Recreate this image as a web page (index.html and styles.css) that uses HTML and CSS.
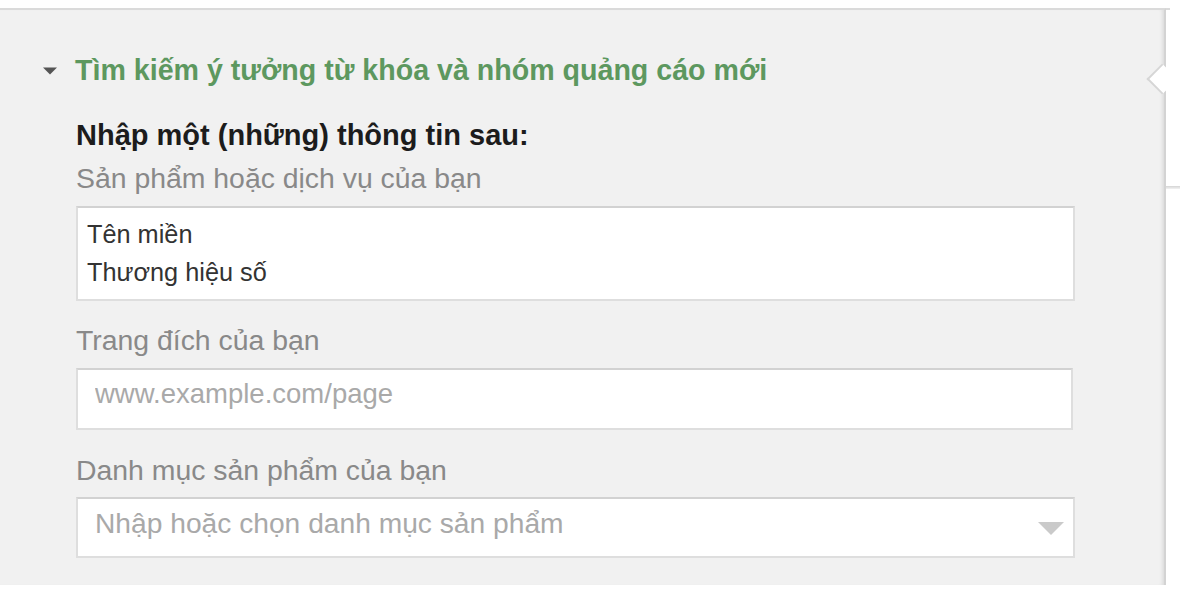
FILE: index.html
```html
<!DOCTYPE html>
<html lang="vi">
<head>
<meta charset="UTF-8" />
<meta name="viewport" content="width=device-width, initial-scale=1.0" />
<title>Tìm kiếm ý tưởng từ khóa</title>
<link rel="stylesheet" href="styles.css">
</head>
<body>
  <div class="frame">
    <div class="panel">
      <span class="notch"></span>
      <h2 class="section-title">
        <svg class="caret" width="16" height="8" viewBox="0 0 16 8"><polygon points="1,0.5 15,0.5 8,7.5" fill="#555" /></svg>
        Tìm kiếm ý tưởng từ khóa và nhóm quảng cáo mới
      </h2>
      <form class="idea-form">
        <p class="intro">Nhập một (những) thông tin sau:</p>
        <label class="field-label first" for="products">Sản phẩm hoặc dịch vụ của bạn</label>
        <textarea id="products" name="products">Tên miền
Thương hiệu số</textarea>

        <label class="field-label" for="landing">Trang đích của bạn</label>
        <input class="text-input" type="text" id="landing" name="landing" placeholder="www.example.com/page" />

        <label class="field-label last" for="category">Danh mục sản phẩm của bạn</label>
        <div class="combo">
          <input type="text" id="category" name="category" placeholder="Nhập hoặc chọn danh mục sản phẩm" />
          <svg class="combo-arrow" width="30" height="15" viewBox="0 0 30 15"><polygon points="2,1 28,1 15,14" fill="#cacaca" /></svg>
        </div>
      </form>
    </div>
    <div class="side"></div>
  </div>
</body>
</html>
```

FILE: styles.css
```css
html {
  margin: 0;
  padding: 0;
  box-sizing: border-box;
}

*, *::before, *::after {
  box-sizing: inherit;
}

body {
  margin: 0;
  background-color: #fff;
  font-family: "Liberation Sans", Arial, sans-serif;
}

.frame {
  display: flex;
  margin-top: 8px;
}

.panel {
  position: relative;
  width: 1166px;
  padding: 44px 0 27px 0;
  background-color: #f1f1f1;
  border-top: 2px solid #dadada;
  border-right: 2px solid #d3d3d3;
  box-shadow: inset -4px 0 4px -3px rgba(0, 0, 0, 0.12);
}

/* little arrow cut into the right edge */
.notch {
  position: absolute;
  left: 1151px;
  top: 58px;
  width: 22px;
  height: 22px;
  background-color: #fff;
  border-left: 2px solid #d6d6d6;
  border-bottom: 2px solid #d6d6d6;
  transform: rotate(45deg);
}

.side {
  flex: 1;
  display: flex;
  flex-direction: column;
}

.side::before {
  content: "";
  width: 4px;
  border-top: 2px solid #dadada;
}

.side::after {
  content: "";
  margin-top: 176px;
  height: 3px;
  background: linear-gradient(#d4d4d4, #f2f2f2);
}

.section-title {
  display: flex;
  align-items: center;
  gap: 17px;
  margin: 0;
  padding-left: 42px;
  font-size: 28.6px;
  line-height: 32px;
  font-weight: bold;
  color: #5d985f;
}

.caret {
  margin-top: 2px;
}

.idea-form {
  display: flex;
  flex-direction: column;
  margin-left: 76px;
  width: 999px;
}

.intro {
  margin: 33px 0 0 0;
  font-size: 29px;
  line-height: 32px;
  font-weight: bold;
  color: #1c1c1c;
}

.field-label {
  display: block;
  margin-top: 23px;
  font-size: 28.4px;
  line-height: 32px;
  color: #898989;
}

.field-label.first {
  margin-top: 11px;
}

.field-label.last {
  margin-top: 24px;
}

textarea {
  display: block;
  margin-top: 12px;
  width: 999px;
  height: 95px;
  padding: 7px 9px;
  resize: none;
  overflow: hidden;
  font-family: inherit;
  font-size: 25.3px;
  line-height: 38px;
  color: #333;
  background-color: #fff;
  border: 2px solid #dedede;
  border-top-color: #d2d2d2;
  border-radius: 0;
  outline: none;
}

.text-input {
  display: block;
  margin-top: 12px;
  width: 997px;
  height: 62px;
  padding: 8px 17px 18px 17px;
  font-family: inherit;
  font-size: 27.5px;
  color: #333;
  background-color: #fff;
  border: 2px solid #dedede;
  border-top-color: #d2d2d2;
  border-radius: 0;
  outline: none;
}

.combo {
  display: flex;
  align-items: center;
  margin-top: 11px;
  width: 999px;
  height: 61px;
  padding: 0 7px 0 17px;
  background-color: #fff;
  border: 2px solid #dedede;
  border-top-color: #d2d2d2;
}

.combo input {
  flex: 1;
  align-self: flex-start;
  height: 57px;
  padding: 8px 0 17px 0;
  font-family: inherit;
  font-size: 28.2px;
  color: #333;
  background: transparent;
  border: none;
  outline: none;
}

.combo-arrow {
  margin-top: 2px;
}

::placeholder {
  color: #a9a9a9;
  opacity: 1;
}
```
